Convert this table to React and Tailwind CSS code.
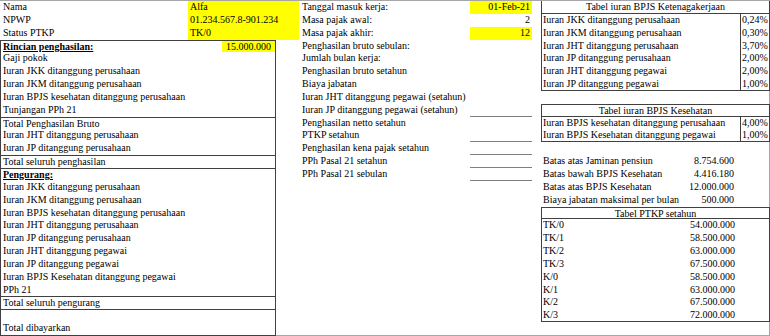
import React from "react";

const R = "h-[12.85px] leading-[12.85px] whitespace-nowrap";
const B = "border-[#404040]";

function LeftBox() {
  const rows = [
    { t: "Gaji pokok" },
    { t: "Iuran JKK ditanggung perusahaan" },
    { t: "Iuran JKM ditanggung perusahaan" },
    { t: "Iuran BPJS kesehatan ditanggung perusahaan" },
    { t: "Tunjangan PPh 21" },
    { t: "Total Penghasilan Bruto", top: true },
    { t: "Iuran JHT ditanggung perusahaan" },
    { t: "Iuran JP ditanggung perusahaan" },
    { t: "Total seluruh penghasilan", top: true },
    { t: "Pengurang:", top: true, bold: true },
    { t: "Iuran JKK ditanggung perusahaan" },
    { t: "Iuran JKM ditanggung perusahaan" },
    { t: "Iuran BPJS kesehatan ditanggung perusahaan" },
    { t: "Iuran JHT ditanggung perusahaan" },
    { t: "Iuran JP ditanggung perusahaan" },
    { t: "Iuran JHT ditanggung pegawai" },
    { t: "Iuran JP ditanggung pegawai" },
    { t: "Iuran BPJS Kesehatan ditanggung pegawai" },
    { t: "PPh 21" },
    { t: "Total seluruh pengurang", top: true },
    { t: "", top: true },
  ];
  return (
    <div className={`w-[276px] border-l border-r ${B}`}>
      <div className={`${R} flex border-t ${B}`}>
        <div className="flex-1 pl-[2px] font-bold underline">Rincian penghasilan:</div>
        <div className="w-[53px] bg-[#ffff00] text-right pr-[4px]">15.000.000</div>
      </div>
      {rows.map((r, i) => (
        <div
          key={i}
          className={`${R} pl-[2px] ${r.top ? `border-t ${B}` : ""} ${r.bold ? "font-bold underline" : ""}`}
        >
          {r.t}
        </div>
      ))}
      <div className={`h-[13.85px] leading-[12.85px] whitespace-nowrap pl-[2px] border-b ${B}`}>
        Total dibayarkan
      </div>
    </div>
  );
}

function LeftCol() {
  const top = [
    ["Nama", "Alfa"],
    ["NPWP", "01.234.567.8-901.234"],
    ["Status PTKP", "TK/0"],
  ];
  return (
    <div className="w-[300px] shrink-0">
      {top.map(([a, b]) => (
        <div key={a} className={`${R} flex`}>
          <div className="w-[188px] pl-[3px]">{a}</div>
          <div className="w-[111px] bg-[#ffff00] pl-[2px]">{b}</div>
        </div>
      ))}
      <LeftBox />
    </div>
  );
}

function MidCol() {
  const rows = [
    { t: "Tanggal masuk kerja:", v: "01-Feb-21", y: true },
    { t: "Masa pajak awal:", v: "2" },
    { t: "Masa pajak akhir:", v: "12", y: true },
    { t: "Penghasilan bruto sebulan:" },
    { t: "Jumlah bulan kerja:" },
    { t: "Penghasilan bruto setahun" },
    { t: "Biaya jabatan" },
    { t: "Iuran JHT ditanggung pegawai (setahun)" },
    { t: "Iuran JP ditanggung pegawai (setahun)", u: true },
    { t: "Penghasilan netto setahun" },
    { t: "PTKP setahun", u: true },
    { t: "Penghasilan kena pajak setahun", u: true },
    { t: "PPh Pasal 21 setahun", u: true },
    { t: "PPh Pasal 21 sebulan", u: true },
  ];
  return (
    <div className="w-[241px] shrink-0">
      {rows.map((r, i) => (
        <div key={i} className={`${R} flex`}>
          <div className="w-[170px] pl-[2px]">{r.t}</div>
          <div
            className={`w-[62px] h-full text-right pr-[2px] ${r.y ? "bg-[#ffff00]" : ""} ${
              r.u ? "border-b border-[#808080]" : ""
            }`}
          >
            {r.v || ""}
          </div>
        </div>
      ))}
      {Array.from({ length: 12 }).map((_, i) => (
        <div key={"b" + i} className={R}></div>
      ))}
    </div>
  );
}

function PctTable({ title, rows, topBorder }) {
  return (
    <div className={`border-l border-r ${B} -mr-px`}>
      <div className={`${R} text-center border-b ${B} ${topBorder ? "border-t" : ""}`}>{title}</div>
      {rows.map(([a, b], i) => (
        <div key={i} className={`${R} flex ${i === rows.length - 1 ? `border-b ${B}` : ""}`}>
          <div className="w-[198px] pl-[1px]">{a}</div>
          <div className={`flex-1 border-l ${B} pl-[1px]`}>{b}</div>
        </div>
      ))}
    </div>
  );
}

function RightCol() {
  const ptkp = [
    ["TK/0", "54.000.000"],
    ["TK/1", "58.500.000"],
    ["TK/2", "63.000.000"],
    ["TK/3", "67.500.000"],
    ["K/0", "58.500.000"],
    ["K/1", "63.000.000"],
    ["K/2", "67.500.000"],
    ["K/3", "72.000.000"],
  ];
  const batas = [
    ["Batas atas Jaminan pensiun", "8.754.600"],
    ["Batas bawah BPJS Kesehatan", "4.416.180"],
    ["Batas atas BPJS Kesehatan", "12.000.000"],
    ["Biaya jabatan maksimal per bulan", "500.000"],
  ];
  return (
    <div className="w-[228px] shrink-0">
      <PctTable
        title="Tabel iuran BPJS Ketenagakerjaan"
        rows={[
          ["Iuran JKK ditanggung perusahaan", "0,24%"],
          ["Iuran JKM ditanggung perusahaan", "0,30%"],
          ["Iuran JHT ditanggung perusahaan", "3,70%"],
          ["Iuran JP ditanggung perusahaan", "2,00%"],
          ["Iuran JHT ditanggung pegawai", "2,00%"],
          ["Iuran JP ditanggung pegawai", "1,00%"],
        ]}
      />
      <div className={R}></div>
      <PctTable
        title="Tabel iuran BPJS Kesehatan"
        topBorder
        rows={[
          ["Iuran BPJS kesehatan ditanggung perusahaan", "4,00%"],
          ["Iuran BPJS Kesehatan ditanggung pegawai", "1,00%"],
        ]}
      />
      <div className={R}></div>
      {batas.map(([a, b]) => (
        <div key={a} className={`${R} flex justify-between pl-[2px] pr-[35px]`}>
          <span>{a}</span>
          <span>{b}</span>
        </div>
      ))}
      <div className={`border-l border-r ${B} -mr-px`}>
        <div className={`${R} text-center border-t border-b ${B}`}>Tabel PTKP setahun</div>
        {ptkp.map(([a, b], i) => (
          <div
            key={a}
            className={`${R} flex justify-between pl-[1px] pr-[34px] ${i === ptkp.length - 1 ? `border-b ${B}` : ""}`}
          >
            <span>{a}</span>
            <span>{b}</span>
          </div>
        ))}
      </div>
      <div className={R}></div>
    </div>
  );
}

export default function App() {
  return (
    <div className="w-[770px] h-[336px] overflow-hidden bg-white">
      <div className="w-[770px] h-[336px] flex border-t border-r border-b border-[#a6a6a6] text-[10px] text-black font-['Liberation_Serif',serif]">
        <LeftCol />
        <MidCol />
        <RightCol />
      </div>
    </div>
  );
}
